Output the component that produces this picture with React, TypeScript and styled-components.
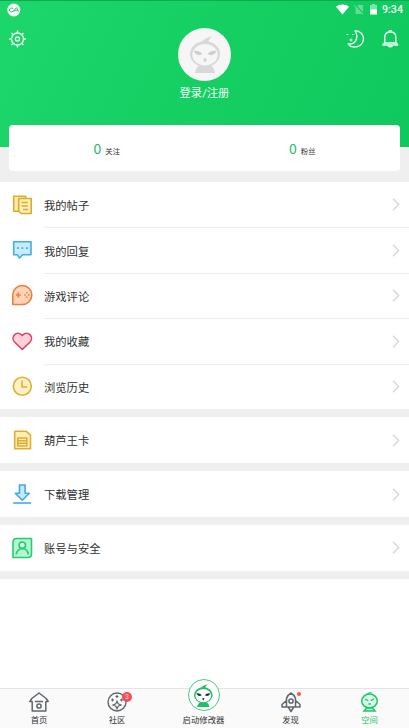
import React from "react";
import styled, { createGlobalStyle } from "styled-components";

const Global = createGlobalStyle`
  * { box-sizing: border-box; }
  body { margin: 0; background: #fff; }
`;

const Page = styled.div`
  width: 409px;
  height: 728px;
  display: flex;
  flex-direction: column;
  overflow: hidden;
  background: #fff;
  color: #303030;
  font-family: Roboto, "Noto Sans CJK SC", sans-serif;
  svg { display: block; flex: none; overflow: visible; }
`;

const Header = styled.header`
  height: 147px;
  flex: none;
  display: flex;
  flex-direction: column;
  background: linear-gradient(115deg, #1dd66c 0%, #15cf63 50%, #10c95e 100%);
`;

const StatusBar = styled.div`
  height: 18px;
  flex: none;
  display: flex;
  align-items: center;
  padding: 0 6px 0 7px;
  border-top: 1px solid #10a850;
`;

const StatusIcons = styled.div`
  margin-left: auto;
  display: flex;
  align-items: center;
`;

const StatusGlyph = styled.span<{ $gap: number }>`
  margin-right: ${(p) => p.$gap}px;
`;

const Clock = styled.span`
  color: #f4fff8;
  font-size: 10.7px;
  font-weight: 500;
  line-height: 14px;
`;

const HeaderRow = styled.div`
  display: grid;
  grid-template-columns: 1fr 61px 1fr;
  padding: 10px 10px 0;
`;

const Actions = styled.div<{ $end?: boolean }>`
  display: flex;
  gap: 17px;
  align-items: flex-start;
  padding-top: 2px;
  margin-left: -1px;
  justify-content: ${(p) => (p.$end ? "flex-end" : "flex-start")};
`;

const Avatar = styled.div`
  width: 53px;
  height: 53px;
  justify-self: center;
  display: grid;
  place-items: center;
  border-radius: 50%;
  background: #f6f6f6;
`;

const Login = styled.div`
  margin-top: 5px;
  text-align: center;
  color: #f2fff7;
  font-size: 11.3px;
  line-height: 16px;
`;

const StatsArea = styled.section`
  height: 35px;
  flex: none;
  padding: 0 9px;
  background: #efefef;
`;

const StatsCard = styled.div`
  height: 46px;
  margin-top: -22px;
  display: flex;
  border-radius: 4px;
  background: #fff;
`;

const Stat = styled.div`
  flex: 1;
  display: flex;
  align-items: baseline;
  justify-content: center;
  gap: 4px;
  padding-top: 14px;
  font-size: 7.4px;
  line-height: 18px;
`;

const Count = styled.span`
  color: #22bd68;
  font-family: "Noto Sans CJK SC", sans-serif;
  font-size: 14px;
`;

const Menu = styled.main`
  flex: 1;
  min-height: 0;
`;

const Group = styled.section`
  padding-bottom: 8.5px;
  background: #efefef;
`;

const Row = styled.div`
  height: 45.4px;
  display: flex;
  align-items: center;
  padding-left: 11px;
  background: #fff;
  & + & > div { border-top: 1px solid #ececec; }
`;

const RowBody = styled.div`
  flex: 1;
  height: 100%;
  margin-left: 11px;
  padding-right: 9px;
  display: flex;
  align-items: center;
  justify-content: space-between;
  font-size: 11.3px;
`;

const NavBar = styled.nav`
  height: 40px;
  flex: none;
  display: grid;
  grid-template-columns: 78px 78px 95px 79px 79px;
  grid-template-rows: 39px;
  border-top: 1px solid #e4e4e4;
  background: #fafafa;
`;

const NavItem = styled.div<{ $active?: boolean }>`
  min-height: 0;
  display: flex;
  flex-direction: column;
  align-items: center;
  justify-content: flex-end;
  padding-bottom: 2px;
  color: ${(p) => (p.$active ? "#20c569" : "#333")};
  font-size: 8.4px;
  line-height: 12px;
`;

const NavIcon = styled.div`
  position: relative;
  margin-bottom: 2px;
`;

const Launch = styled.div`
  width: 32px;
  height: 32px;
  margin-bottom: 3px;
  flex: none;
  display: grid;
  place-items: center;
  border: 1px solid #4ccb83;
  border-radius: 50%;
  background: #fff;
`;

const Badge = styled.span`
  position: absolute;
  left: 15px;
  top: 0;
  width: 10px;
  height: 10px;
  border-radius: 50%;
  background: #f9495a;
  color: #ffdfe2;
  font-size: 7px;
  line-height: 10px;
  text-align: center;
`;

const Dot = styled.span`
  position: absolute;
  left: 16px;
  top: 0;
  width: 4px;
  height: 4px;
  border-radius: 50%;
  background: #f5583e;
`;

type MascotProps = { height: number; color: string; face: string; eyes: string };

const Mascot = ({ height, color, face, eyes }: MascotProps) => (
  <svg width={(height * 30) / 37} height={height} viewBox="0 0 30 37">
    <path d="M5 37C6 31 9 28 15 28s9 3 10 9Z" fill={color} />
    <path d="M11 7C13 3.500 16 2 22.500 0 19.500 2 18.500 4 18.500 7Z" fill={color} />
    <ellipse cx="15" cy="18" rx="15" ry="12.800" fill={color} />
    <ellipse cx="15" cy="18.700" rx="12.700" ry="10.700" fill={face} />
    <path d="M3.800 15C8 14.300 11 16 12.500 18 9 20.300 5 19 3.800 15ZM26.200 15C22 14.300 19 16 17.500 18 21 20.300 25 19 26.200 15Z" fill={eyes} />
    <path d="M13.500 22l1.500.8 1.500-.8-.2 3q-1.300 2-2.600 0Z" fill={eyes} />
  </svg>
);

const RecorderIcon = () => (
  <svg width="14" height="14" viewBox="0 0 14 14" fill="none" stroke="#25b35f" strokeWidth=".9">
    <circle cx="6.800" cy="7" r="6.500" fill="#f8fff9" stroke="none" />
    <path d="M6.200 5.500C4.600 4.500 2.400 5.200 2.400 7s2.200 2.500 3.800 1.500L8.600 5.300q.8-.8 1.500 0l1.200 3.500M7 8.800l1-1.500h2.500" />
  </svg>
);

const WifiIcon = () => (
  <svg width="13" height="11" viewBox="0 0 13 11"><path d="M0 2.800C3.500-.2 9.500-.2 13 2.800L6.500 10.500Z" fill="#fff" /></svg>
);

const NoSimIcon = () => (
  <svg width="10" height="11" viewBox="0 0 10 11">
    <path d="M1.500 3.500L4 1h5v9H1.500Z" fill="#5fdc95" />
    <path d="M1 .5l8.500 9.500" stroke="#12c95f" strokeWidth="1.200" />
    <path d="M.3 1.300l8.500 9.200" stroke="#73e4a3" strokeWidth=".9" />
  </svg>
);

const BatteryIcon = () => (
  <svg width="7" height="11" viewBox="0 0 7 11">
    <path d="M0 1h2V0h3v1h2v5H0Z" fill="#7ce6a9" />
    <path d="M0 5.500h7v5H0Z" fill="#fff" />
  </svg>
);

const SettingsIcon = () => (
  <svg width="17" height="18" viewBox="-8.500 -9 17 18" fill="none" stroke="#e9fff1" strokeWidth="1.300">
    <circle r="6" />
    <circle r="2" />
    {[0, 45, 90, 135, 180, 225, 270, 315].map((a) => (
      <path key={a} d="M0-6v-2.400" strokeWidth="1.500" transform={`rotate(${a})`} />
    ))}
  </svg>
);

const MoonIcon = () => (
  <svg width="19" height="18" viewBox="0 0 19 18" fill="none" stroke="#e9fff1" strokeWidth="1.400">
    <path d="M9 .800C14.500 .800 17.500 4.500 17.500 8.700c0 5-4 8.300-8.500 8.300-3 0-5.500-1-6.800-3.200 3 .5 5.500-.3 7-2.300C11.300 8.500 11.500 4.500 9 .800Z" strokeLinejoin="round" />
    <path d="M5 8.500v3M3.500 10h3M.5 4.500h1.800M6 4.500h1.600" strokeWidth="1" />
  </svg>
);

const BellIcon = () => (
  <svg width="17" height="18" viewBox="0 0 17 18" fill="none" stroke="#e9fff1" strokeWidth="1.400">
    <path d="M2.800 13V7C2.800 4 5 2 8.300 2S13.800 4 13.800 7V13M2.300 13L.8 15h15l-1.500-2ZM6.800 .8h3M6 15.500q2.300 2.800 4.600 0" strokeLinejoin="round" />
  </svg>
);

const Chevron = () => (
  <svg width="8" height="13" viewBox="0 0 8 13" fill="none" stroke="#d6d6d6" strokeWidth="1.300"><path d="M1 .700l5.700 5.800-5.700 5.800" /></svg>
);

const rowIcons: Record<string, React.ReactNode> = {
  posts: (
    <g stroke="#dfac27" fill="#fbe9b3">
      <path d="M2.700 2.200h12v15h-12Z" />
      <path d="M7.700 4.500h12.500v15H10.200l-2.500-2.500Z" fill="#fff0c3" />
      <path d="M10.500 8.500h6.500M10.500 12h6.500M12 15.500h5" />
    </g>
  ),
  replies: (
    <g stroke="#42afe2" fill="#c7ebff">
      <path d="M2.700 2.700h17.300v13.100H11.500l-3 3.200-2-3.200H2.700Z" />
      <path d="M6 9.200h1.800M10.500 9.200h1.800M15 9.200h1.800" strokeWidth="1.800" />
    </g>
  ),
  reviews: (
    <g stroke="#ee7e3e" fill="#ffd3b7">
      <path d="M1.800 20.500V11a9.500 9.500 0 1 1 9.500 9.500Z" />
      <path d="M4.800 11h5M7.300 8.500v5" />
      <path d="M13.200 11h1.400M17 11h1.400M15.100 8.800h1.400M15.100 13.200h1.400" strokeWidth="1.400" />
    </g>
  ),
  favorites: <path d="M11.300 19.500L3.500 12C-1 7 6-.5 11.300 5.500 16.600-.5 23.600 7 19.100 12Z" stroke="#db4666" fill="#ffd0d8" />,
  history: (
    <g stroke="#dfb133" fill="#fff0c5">
      <circle cx="11.300" cy="11.300" r="9" />
      <path d="M11 5.500V12h5.500" />
    </g>
  ),
  card: (
    <g stroke="#dfaf34" fill="#ffedb9">
      <path d="M3.700 2.200h11.300l4.500 4v13.600H3.700Z" />
      <path d="M6.800 9h9v8H6.800ZM7 11.700h8.500M7 14.300h8.500" />
    </g>
  ),
  download: (
    <g stroke="#44a9df" fill="#c5eaff">
      <path d="M8.500 2h5.600v8.200h4.200l-7 7-7-7h4.200Z" />
      <path d="M2.200 20h17.800" />
    </g>
  ),
  account: (
    <g stroke="#27cb74" fill="#b2f7cf">
      <path d="M5.500 1.500h15v15.500q0 3.500-3.500 3.500H2V5.200q0-3.700 3.500-3.700Z" />
      <circle cx="11.300" cy="8.200" r="3.200" fill="#d0ffe1" />
      <path d="M5.300 17.500q.5-5.500 6-6 5.500.5 6 6" fill="none" />
    </g>
  ),
};

const RowIcon = ({ name }: { name: string }) => (
  <svg width="22" height="22" viewBox="0 0 22 22" strokeWidth="1.600" strokeLinejoin="round">{rowIcons[name]}</svg>
);

const HomeIcon = () => (
  <svg width="20" height="20" viewBox="0 0 20 20" fill="none" stroke="#60676a" strokeWidth="1.500">
    <path d="M3.200 9.500v9.500h13.600V9.500M3.500 9.500H.8L2.800 6.500 10 1l7.200 5.500 2 3h-2.700M6 9.500h8" strokeLinejoin="round" />
    <circle cx="10" cy="14" r="2.100" />
  </svg>
);

const CommunityIcon = () => (
  <svg width="20" height="20" viewBox="0 0 20 20" fill="none" stroke="#60676a" strokeWidth="1.200">
    <circle cx="10" cy="10" r="9" strokeWidth="1.400" />
    <path d="M10 9.200l1.200 2.600L14 13l-2.800 1.200L10 16.800l-1.200-2.600L6 13l2.800-1.200ZM5.500 6.500v3M4 8h3M10 3v3M8.500 4.500h3M14.500 6.500v3M13 8h3" />
  </svg>
);

const RocketIcon = () => (
  <svg width="20" height="20" viewBox="0 0 20 20" fill="none" stroke="#60676a" strokeWidth="1.500" strokeLinejoin="round">
    <path d="M5.500 15V6.500Q7 2.500 10 1q3 1.500 4.500 5.500V15ZM5.500 8.500L1 12.500V15h4.500M14.500 8.500L19 12.500V15h-4.500M7.500 15.500L10 19.500l2.500-4" />
    <circle cx="10" cy="9" r="2.100" />
  </svg>
);

const SpaceIcon = () => (
  <svg width="20" height="20" viewBox="0 0 20 20" fill="none" stroke="#21c66c" strokeWidth="1.500">
    <ellipse cx="9.500" cy="9" rx="7.800" ry="6.900" fill="#dafbe8" />
    <path d="M7.500 2Q8.500 .6 11.500 .6M5 7l3.300 1.600M14 7l-3.300 1.600M8.300 12h2.400" strokeWidth="1.300" />
    <path d="M6.500 16h6l2.500 3H4Z" fill="#b6f4d0" />
  </svg>
);

const groups = [
  [
    { icon: "posts", label: "我的帖子" },
    { icon: "replies", label: "我的回复" },
    { icon: "reviews", label: "游戏评论" },
    { icon: "favorites", label: "我的收藏" },
    { icon: "history", label: "浏览历史" },
  ],
  [{ icon: "card", label: "葫芦王卡" }],
  [{ icon: "download", label: "下载管理" }],
  [{ icon: "account", label: "账号与安全" }],
];

export default function App() {
  return (
    <Page>
      <Global />
      <Header>
        <StatusBar>
          <RecorderIcon />
          <StatusIcons>
            <StatusGlyph $gap={5}><WifiIcon /></StatusGlyph>
            <StatusGlyph $gap={6}><NoSimIcon /></StatusGlyph>
            <StatusGlyph $gap={5}><BatteryIcon /></StatusGlyph>
            <Clock>9:34</Clock>
          </StatusIcons>
        </StatusBar>
        <HeaderRow>
          <Actions><SettingsIcon /></Actions>
          <Avatar><Mascot height={37} color="#d8d8d8" face="#f6f6f6" eyes="#cfcfcf" /></Avatar>
          <Actions $end><MoonIcon /><BellIcon /></Actions>
        </HeaderRow>
        <Login>登录/注册</Login>
      </Header>
      <StatsArea>
        <StatsCard>
          <Stat><Count>0</Count>关注</Stat>
          <Stat><Count>0</Count>粉丝</Stat>
        </StatsCard>
      </StatsArea>
      <Menu>
        {groups.map((rows, i) => (
          <Group key={i}>
            {rows.map((row) => (
              <Row key={row.icon}>
                <RowIcon name={row.icon} />
                <RowBody>{row.label}<Chevron /></RowBody>
              </Row>
            ))}
          </Group>
        ))}
      </Menu>
      <NavBar>
        <NavItem><NavIcon><HomeIcon /></NavIcon>首页</NavItem>
        <NavItem><NavIcon><CommunityIcon /><Badge>3</Badge></NavIcon>社区</NavItem>
        <NavItem><Launch><Mascot height={23} color="#21bf66" face="#fff" eyes="#25372b" /></Launch>启动修改器</NavItem>
        <NavItem><NavIcon><RocketIcon /><Dot /></NavIcon>发现</NavItem>
        <NavItem $active><NavIcon><SpaceIcon /></NavIcon>空间</NavItem>
      </NavBar>
    </Page>
  );
}
